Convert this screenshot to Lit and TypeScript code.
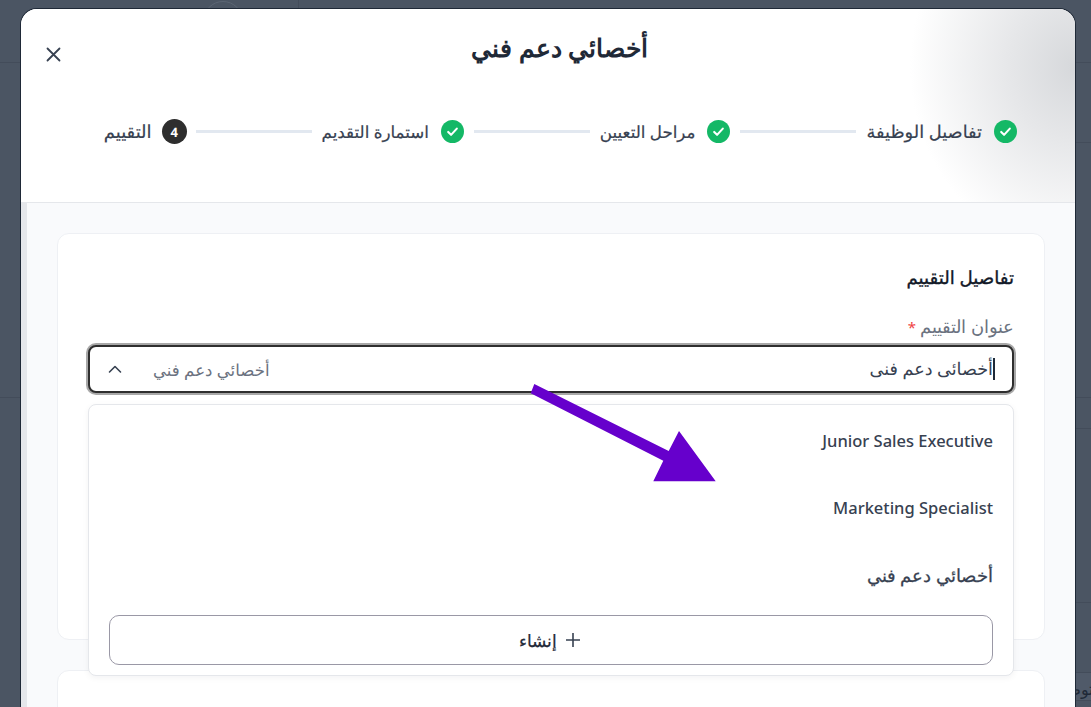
import { LitElement, html, css } from "lit";
import { customElement } from "lit/decorators.js";

const steps = [
  { label: "تفاصيل الوظيفة", done: true, size: 17.8 },
  { label: "مراحل التعيين", done: true, size: 16.7 },
  { label: "استمارة التقديم", done: true, size: 16.7 },
  { label: "التقييم", done: false, size: 18 },
];

const options = [
  { label: "Junior Sales Executive", ar: false },
  { label: "Marketing Specialist", ar: false },
  { label: "أخصائي دعم فني", ar: true },
];

@customElement("app-root")
export class AppRoot extends LitElement {
  static styles = css`
    :host {
      display: block;
      height: 707px;
      overflow: hidden;
      position: relative;
      background: #4b5563;
      font-family: "Noto Sans", sans-serif;
      color: #374151;
    }
    .page-line {
      position: absolute;
      height: 1px;
      background: #434c5a;
    }
    .page-row {
      position: absolute;
      left: 1076px;
      right: 0;
      top: 672px;
      height: 29px;
      background: #505a69;
      border-top: 1px solid #434c5a;
      border-bottom: 1px solid #434c5a;
      box-sizing: border-box;
    }
    .page-text {
      position: absolute;
      right: -12px;
      top: 678px;
      white-space: nowrap;
      font-size: 16px;
      color: #1f2937;
    }
    .page-circle {
      position: absolute;
      left: 203px;
      top: 1px;
      width: 38px;
      height: 38px;
      border: 1px solid #5b6573;
      border-radius: 50%;
    }
    .modal {
      position: absolute;
      left: 21px;
      top: 9px;
      width: 1054px;
      height: 698px;
      display: flex;
      flex-direction: column;
      background: #fff;
      border-radius: 16px 16px 0 0;
      box-shadow: 0 0 0 1px #1f2937;
      overflow: hidden;
    }
    .header {
      position: relative;
      height: 194px;
      flex: none;
      box-sizing: border-box;
      border-bottom: 1px solid #e5e7eb;
      background: radial-gradient(ellipse 165px 185px at 100% 30%, #d6d8db 0%, #e6e7e9 40%, #ffffff 100%);
    }
    .close {
      position: absolute;
      left: 24px;
      top: 37px;
      width: 17px;
      height: 17px;
      color: #374151;
    }
    .title {
      margin: 0;
      padding: 20px 0 0 24px;
      text-align: center;
      font-size: 25px;
      line-height: 36px;
      font-weight: 700;
      color: #1f2937;
    }
    .stepper {
      direction: rtl;
      display: flex;
      align-items: center;
      margin-top: 54px;
      padding: 0 58px;
    }
    .step {
      display: flex;
      align-items: center;
      gap: 12px;
      line-height: 24px;
      font-weight: 400;
      color: #374151;
      text-rendering: geometricPrecision;
      -webkit-text-stroke: 0.2px #374151;
      white-space: nowrap;
    }
    .badge {
      width: 23px;
      height: 23px;
      flex: none;
      display: block;
    }
    .number {
      width: 25px;
      height: 25px;
      flex: none;
      margin: 0 -1px 0 -2px;
      border-radius: 50%;
      background: #2e2e2e;
      color: #fff;
      -webkit-text-stroke: 0;
      display: flex;
      align-items: center;
      justify-content: center;
      font-size: 13px;
      font-weight: 700;
    }
    .connector {
      width: 116px;
      height: 3px;
      flex: none;
      margin: 0 10px;
      background: #e2e8f0;
    }
    .body {
      flex: 1;
      position: relative;
      background: #f9fafc;
      padding: 30px 30px 0 36px;
      border-left: 6px solid #e5e7eb;
    }
    .body-inner {
      margin-left: -6px;
      display: flex;
      flex-direction: column;
      gap: 30px;
    }
    .card {
      background: #fff;
      border: 1px solid #eef0f4;
      border-radius: 12px;
      box-sizing: border-box;
    }
    .card.main {
      height: 407px;
      direction: rtl;
      padding: 30px 30px 0;
      position: relative;
    }
    .card.next {
      height: 60px;
    }
    .section {
      margin: 0;
      font-size: 18.2px;
      line-height: 28px;
      font-weight: 400;
      text-rendering: geometricPrecision;
      -webkit-text-stroke: 0.35px #111827;
      color: #111827;
    }
    .label {
      margin-top: 22px;
      height: 24px;
      font-size: 17.5px;
      line-height: 24px;
      color: #6b7280;
    }
    .label span {
      color: #ef4444;
      font-size: 15px;
      line-height: 0;
    }
    .select {
      margin-top: 7px;
      height: 48px;
      box-sizing: border-box;
      border: 2px solid #2e2e2e;
      box-shadow: 0 0 0 2px #a8a8a8;
      border-radius: 8px;
      display: flex;
      align-items: center;
      padding: 0 19px 0 17px;
      background: #fff;
    }
    .typed {
      font-size: 17.6px;
      text-rendering: geometricPrecision;
      color: #374151;
      border-right: 2px solid #1f2937;
      line-height: 22px;
      margin-right: -2px;
    }
    .hint {
      margin-right: auto;
      font-size: 16.6px;
      text-rendering: geometricPrecision;
      color: #6b7280;
    }
    .chevron {
      width: 16px;
      height: 16px;
      margin-right: 30px;
      color: #374151;
      flex: none;
    }
    .menu {
      position: absolute;
      left: 30px;
      right: 30px;
      top: 170px;
      height: 272px;
      box-sizing: border-box;
      background: #fff;
      border: 1px solid #e5e7eb;
      border-radius: 8px;
      box-shadow: 0 2px 6px rgba(17, 24, 39, 0.05);
      padding: 2px 20px 10px;
      display: flex;
      flex-direction: column;
    }
    .option {
      height: 67px;
      display: flex;
      align-items: center;
      font-size: 16.5px;
      font-weight: 500;
      color: #374151;
      flex: none;
    }
    .option.ar {
      font-size: 18px;
      font-weight: 400;
      -webkit-text-stroke: 0.25px #374151;
    }
    .create {
      margin-top: auto;
      height: 50px;
      box-sizing: border-box;
      border: 1px solid #9a98a6;
      border-radius: 10px;
      display: flex;
      align-items: center;
      justify-content: center;
      gap: 8px;
      padding-right: 2px;
      font-size: 17px;
      font-weight: 400;
      -webkit-text-stroke: 0.25px #1f2937;
      color: #1f2937;
    }
    .create svg {
      width: 16px;
      height: 16px;
    }
    .arrow {
      position: absolute;
      left: 525px;
      top: 378px;
      width: 200px;
      height: 110px;
      pointer-events: none;
    }
  `;

  private check() {
    return html`<svg class="badge" viewBox="0 0 24 24">
      <circle cx="12" cy="12" r="12" fill="#14b866"></circle>
      <path d="M7.5 12.5l3 3 6-6.5" fill="none" stroke="#fff" stroke-width="2.2" stroke-linecap="round" stroke-linejoin="round"></path>
    </svg>`;
  }

  render() {
    return html`
      <div class="page-circle"></div>
      <div class="page-line" style="left:298px;width:1px;top:0;height:9px"></div>
      <div class="page-line" style="left:0;width:21px;top:62px"></div>
      <div class="page-line" style="left:0;width:21px;top:397px"></div>
      <div class="page-line" style="left:1076px;width:15px;top:62px"></div>
      <div class="page-line" style="left:1076px;width:15px;top:142px"></div>
      <div class="page-line" style="left:1076px;width:15px;top:397px"></div>
      <div class="page-line" style="left:1076px;width:15px;top:428px"></div>
      <div class="page-line" style="left:1076px;width:15px;top:602px"></div>
      <div class="page-row"></div>
      <div class="page-text" dir="rtl">التوظيف</div>

      <div class="modal">
        <div class="header">
          <svg class="close" viewBox="0 0 17 17" fill="none" stroke="currentColor" stroke-width="1.8" stroke-linecap="round">
            <path d="M2.5 2.5l12 12M14.5 2.5l-12 12"></path>
          </svg>
          <h1 class="title" dir="rtl">أخصائي دعم فني</h1>
          <div class="stepper">
            ${steps.map(
              (s, i) => html`
                <div class="step">
                  ${s.done ? this.check() : html`<span class="number">4</span>`}
                  <span style="font-size:${s.size}px">${s.label}</span>
                </div>
                ${i < steps.length - 1 ? html`<div class="connector"></div>` : ""}
              `
            )}
          </div>
        </div>
        <div class="body">
          <div class="body-inner">
            <div class="card main">
              <h2 class="section">تفاصيل التقييم</h2>
              <div class="label">عنوان التقييم <span>*</span></div>
              <div class="select">
                <span class="typed">أخصائى دعم فنى</span>
                <span class="hint">أخصائي دعم فني</span>
                <svg class="chevron" viewBox="0 0 16 16" fill="none" stroke="currentColor" stroke-width="1.6" stroke-linecap="round" stroke-linejoin="round">
                  <path d="M2.5 11l5.5-5.5 5.5 5.5"></path>
                </svg>
              </div>
              <div class="menu">
                ${options.map((o) => html`<div class="option ${o.ar ? "ar" : ""}">${o.label}</div>`)}
                <div class="create">
                  <svg viewBox="0 0 16 16" fill="none" stroke="#374151" stroke-width="1.6">
                    <path d="M8 1v14M1 8h14"></path>
                  </svg>
                  <span>إنشاء</span>
                </div>
              </div>
            </div>
            <div class="card next"></div>
          </div>
        </div>
      </div>

      <svg class="arrow" viewBox="0 0 200 110">
        <path d="M9.3 6 L5.7 15.3 L138.3 82.7 L128.3 103.3 L190.7 103.3 L154 53 L143.7 73 Z" fill="#6600cc"></path>
      </svg>
    `;
  }
}
